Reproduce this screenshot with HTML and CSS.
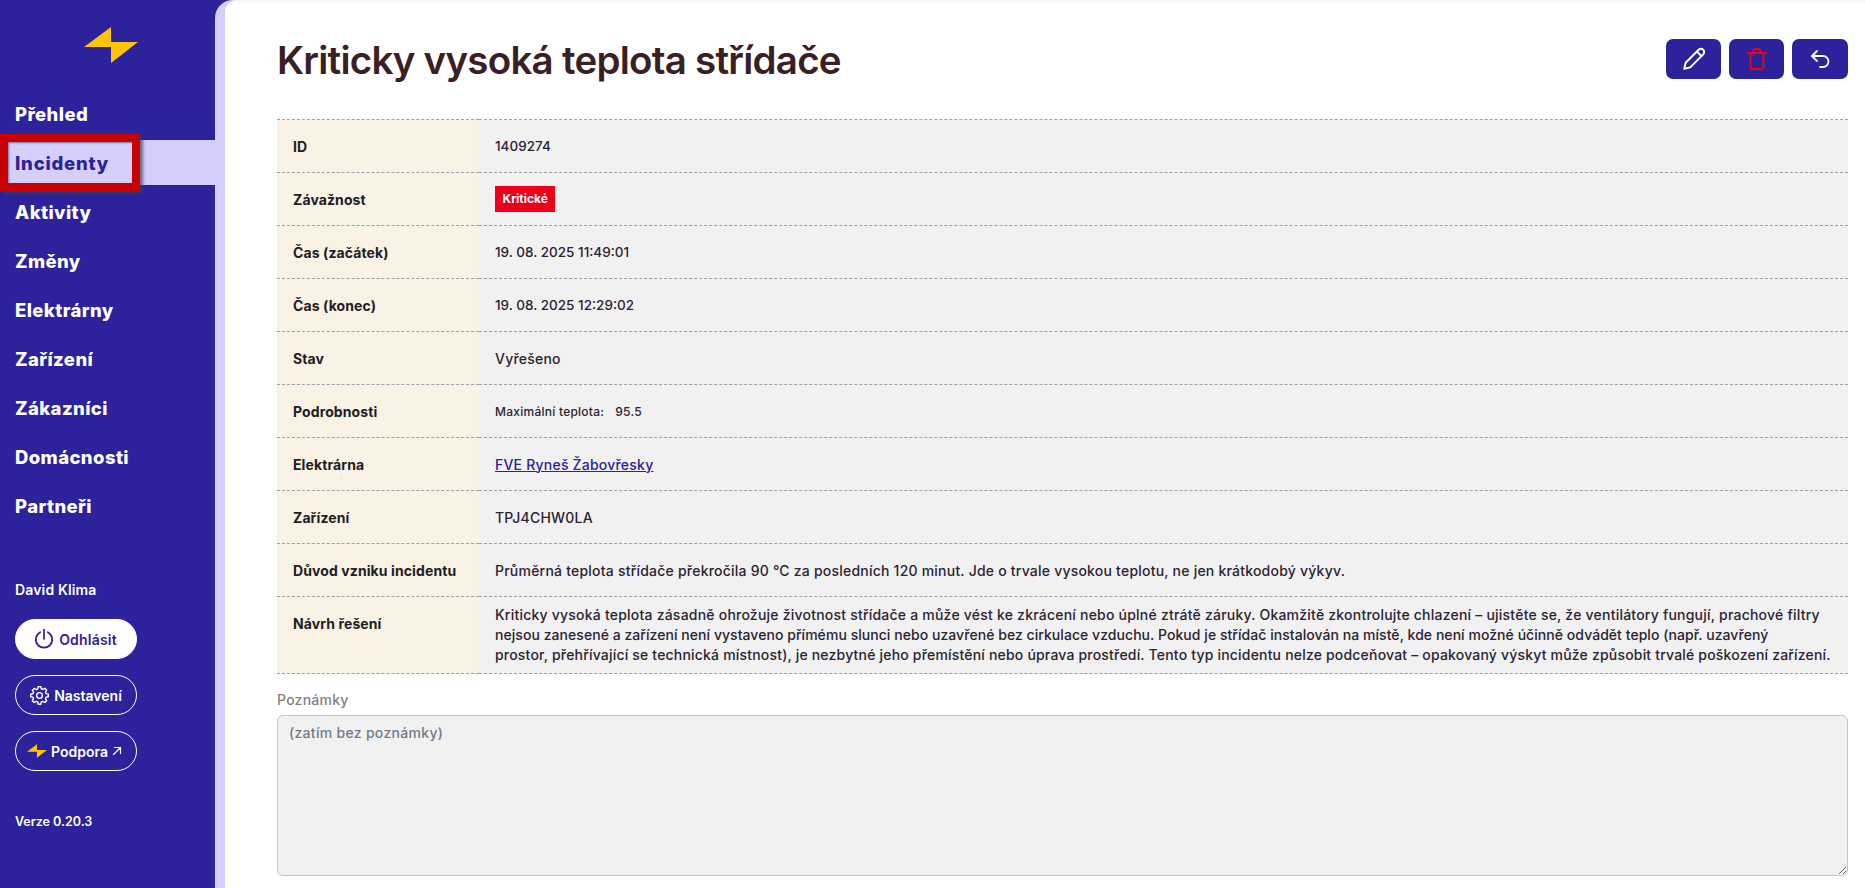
FILE: index.html
```html
<!DOCTYPE html>
<html lang="cs">
<head>
<meta charset="utf-8">
<title>Kriticky vysoká teplota střídače</title>
<link rel="stylesheet" href="styles.css">
</head>
<body>
<div class="app">
  <aside class="sidebar">
    <div class="logo">
      <svg width="54" height="36" viewBox="0 0 54 36"><path class="bolt" d="M0 20 L27 0 V15 H54 L27 36 V20 Z"/></svg>
    </div>
    <nav class="nav">
      <a class="nav-item">Přehled</a>
      <a class="nav-item active">Incidenty<span class="marker"></span></a>
      <a class="nav-item">Aktivity</a>
      <a class="nav-item">Změny</a>
      <a class="nav-item">Elektrárny</a>
      <a class="nav-item">Zařízení</a>
      <a class="nav-item">Zákazníci</a>
      <a class="nav-item">Domácnosti</a>
      <a class="nav-item">Partneři</a>
    </nav>
    <div class="user">David Klima</div>
    <div class="side-buttons">
      <a class="pill pill-solid">
        <svg width="22" height="22" viewBox="0 0 22 22" class="ico"><path d="M7.2 4.2 A8.2 8.2 0 1 0 14.8 4.2"/><path d="M11 1.5 V11"/></svg>
        Odhlásit
      </a>
      <a class="pill">
        <svg width="19" height="19" viewBox="0 0 16 16" class="ico ico-thin"><path d="M6.9 1h2.2l.4 1.9 1.3.6 1.7-1 1.5 1.6-1 1.6.5 1.3 1.9.4v2.2l-1.9.4-.5 1.3 1 1.7-1.5 1.5-1.7-1-1.3.5-.4 1.9H6.9l-.4-1.9-1.3-.5-1.7 1-1.5-1.5 1-1.7-.6-1.3L.5 9.7V7.5l1.9-.4.6-1.3-1-1.6 1.5-1.6 1.7 1 1.3-.6z" transform="translate(0 -.6)"/><circle cx="8" cy="8" r="2.4"/></svg>
        Nastavení
      </a>
      <a class="pill pill-support">
        <svg width="20" height="14" viewBox="0 0 54 36"><path class="bolt" d="M0 20 L27 0 V15 H54 L27 36 V20 Z"/></svg>
        Podpora
        <svg width="10" height="10" viewBox="0 0 10 10" class="ico ico-thin"><path d="M1.5 8.5 L8.5 1.5 M2.5 1.5 H8.5 V7.5"/></svg>
      </a>
    </div>
    <div class="version">Verze 0.20.3</div>
  </aside>
  <div class="frame">
    <main class="main">
      <header class="head">
        <h1 class="title">Kriticky vysoká teplota střídače</h1>
        <div class="actions">
          <button class="act">
            <svg width="26" height="26" viewBox="0 0 24 24" class="ico ico-mid"><path d="M3 21 L4.3 15.5 L16.3 3.5 A2.5 2.5 0 0 1 20.5 7.7 L8.5 19.7 Z"/><path d="M14.8 5.2 L18.8 9.2"/></svg>
          </button>
          <button class="act">
            <svg width="24" height="24" viewBox="0 0 24 24" class="ico ico-red"><path d="M2.5 6 H21.5"/><path d="M5.5 6 V20 A2 2 0 0 0 7.5 22 H16.5 A2 2 0 0 0 18.5 20 V6"/><path d="M8.5 6 V4 A2 2 0 0 1 10.5 2 H13.5 A2 2 0 0 1 15.5 4 V6"/></svg>
          </button>
          <button class="act act-wide">
            <svg width="24" height="24" viewBox="0 0 24 24" class="ico ico-mid"><path d="M9 14 L4 9 L9 4"/><path d="M4 9 H15 A5.5 5.5 0 0 1 15 20 H12"/></svg>
          </button>
        </div>
      </header>
      <table class="detail">
        <tr><th>ID</th><td class="num">1409274</td></tr>
        <tr><th>Závažnost</th><td><span class="badge">Kritické</span></td></tr>
        <tr><th>Čas (začátek)</th><td class="num">19. 08. 2025 11:49:01</td></tr>
        <tr><th>Čas (konec)</th><td class="num">19. 08. 2025 12:29:02</td></tr>
        <tr><th>Stav</th><td>Vyřešeno</td></tr>
        <tr><th>Podrobnosti</th><td class="small"><span class="kv-key">Maximální teplota:</span>95.5</td></tr>
        <tr><th>Elektrárna</th><td><a class="link">FVE Ryneš Žabovřesky</a></td></tr>
        <tr><th>Zařízení</th><td>TPJ4CHW0LA</td></tr>
        <tr><th>Důvod vzniku incidentu</th><td>Průměrná teplota střídače překročila 90 °C za posledních 120 minut. Jde o trvale vysokou teplotu, ne jen krátkodobý výkyv.</td></tr>
        <tr class="tall"><th>Návrh řešení</th><td><span class="line line-a">Kriticky vysoká teplota zásadně ohrožuje životnost střídače a může vést ke zkrácení nebo úplné ztrátě záruky. Okamžitě zkontrolujte chlazení – ujistěte se, že ventilátory fungují, prachové filtry</span> <span class="line line-b">nejsou zanesené a zařízení není vystaveno přímému slunci nebo uzavřené bez cirkulace vzduchu. Pokud je střídač instalován na místě, kde není možné účinně odvádět teplo (např. uzavřený</span> <span class="line line-c">prostor, přehřívající se technická místnost), je nezbytné jeho přemístění nebo úprava prostředí. Tento typ incidentu nelze podceňovat – opakovaný výskyt může způsobit trvalé poškození zařízení.</span></td></tr>
      </table>
      <label class="notes-label" for="notes">Poznámky</label>
      <textarea id="notes" class="notes" readonly placeholder="(zatím bez poznámky)"></textarea>
    </main>
  </div>
</div>
</body>
</html>
```

FILE: styles.css
```css
* { box-sizing: border-box; }
html, body { margin: 0; padding: 0; height: 100%; overflow: hidden; }
body { font-family: Inter, "Noto Sans", sans-serif; background: #2c229b; color: #2b2430; }
.app { display: flex; width: 1865px; height: 888px; }
.sidebar { width: 215px; flex: none; background: #2c229b; color: #fff; display: flex; flex-direction: column; }
.logo { height: 91px; padding: 27px 0 0 84px; }
.logo svg, .pill svg { display: block; flex: none; }
.bolt { fill: #ffc600; }
.nav { display: flex; flex-direction: column; gap: 4px; }
.nav-item { position: relative; height: 45px; display: flex; align-items: center; padding-left: 15px; font-size: 18.5px; font-weight: 800; letter-spacing: .4px; color: #fff; }
.nav-item.active { background: #d4cffd; color: #2c229b; letter-spacing: .8px; }
.marker { position: absolute; left: 0; top: -6px; width: 140px; height: 57px; border: 8px solid #c90000; box-shadow: 3px 3px 3px rgba(60, 60, 90, .7), inset 1px 1px 2px rgba(60, 60, 90, .6); }
.user { margin-top: 52px; padding-left: 15px; font-size: 14px; font-weight: 600; letter-spacing: .15px; line-height: 20px; }
.side-buttons { display: flex; flex-direction: column; gap: 16px; margin-top: 19px; padding-left: 15px; }
.pill { width: 122px; height: 40px; border: 1px solid #fff; border-radius: 20px; display: flex; align-items: center; justify-content: center; gap: 5px; font-size: 14px; font-weight: 600; color: #fff; }
.pill-solid { background: #fff; color: #2c229b; gap: 4px; padding-right: 2px; letter-spacing: .2px; }
.pill-support { gap: 4px; padding-right: 3px; }
.ico { fill: none; stroke: currentColor; stroke-width: 1.7; stroke-linecap: round; stroke-linejoin: round; }
.ico-thin { stroke-width: 1.2; }
.ico-mid { stroke-width: 1.8; color: #fff; }
.ico-red { stroke-width: 1.9; color: #ee0018; }
.version { margin-top: 42px; padding-left: 15px; font-size: 12.5px; font-weight: 600; line-height: 18px; }
.frame { flex: 1; min-width: 0; background: #d4cffd; border-top-left-radius: 18px; padding-left: 10px; }
.main { height: 888px; background: #fff; border-top-left-radius: 12px; padding: 0 17px 0 52px; box-shadow: inset 0 3px 3px -2px rgba(0,0,0,.06); }
.head { display: flex; justify-content: space-between; align-items: flex-start; height: 119px; }
.title { margin: 36px 0 0; font-size: 38.5px; line-height: 48px; font-weight: 600; color: #3a2024; letter-spacing: -.75px; }
.actions { display: flex; gap: 8px; margin-top: 39px; }
.act { width: 55px; height: 40px; border: 0; padding: 0; border-radius: 7px; background: #2c229b; display: flex; align-items: center; justify-content: center; }
.act-wide { width: 56px; }
.detail { width: 100%; border-collapse: collapse; border-top: 1px dashed #a0a0a8; font-size: 14px; letter-spacing: .22px; table-layout: fixed; }
.detail tr { height: 53px; border-bottom: 1px dashed #a0a0a8; }
.detail th { width: 202px; padding: 0 0 0 16px; background: #f9f2e5; text-align: left; font-weight: 700; color: #221c24; letter-spacing: .1px; }
.detail td { padding: 0 0 0 16px; background: #f1f1f2; font-weight: 500; color: #2b2430; }
.detail .num { font-size: 13.5px; letter-spacing: 0; }
.detail .tall { height: 77px; }
.detail .tall th { vertical-align: top; padding-top: 18px; }
.detail .tall td { line-height: 20px; }
.line { display: block; white-space: nowrap; }
.line-a { letter-spacing: .22px; }
.line-b { letter-spacing: .05px; }
.line-c { letter-spacing: .19px; }
.badge { display: inline-block; height: 26px; line-height: 26px; padding: 0 7.5px; background: #ee0018; color: #fff; font-size: 12px; font-weight: 700; letter-spacing: 0; }
.detail .small { font-size: 12px; letter-spacing: .25px; }
.kv-key { margin-right: 11px; }
.link { color: #2c229b; text-decoration: underline; }
.notes-label { display: block; margin-top: 17px; font-size: 14px; letter-spacing: .25px; line-height: 18px; color: #85807e; font-weight: 500; }
.notes { display: block; width: 100%; height: 161px; margin-top: 6px; padding: 7px 11px; background: #f1f1f2; border: 1px solid #c3c6d0; border-radius: 6px; font: 500 14px/20px Inter, sans-serif; letter-spacing: .3px; outline: none; }
.notes::placeholder { color: #717a8a; opacity: 1; }
```
